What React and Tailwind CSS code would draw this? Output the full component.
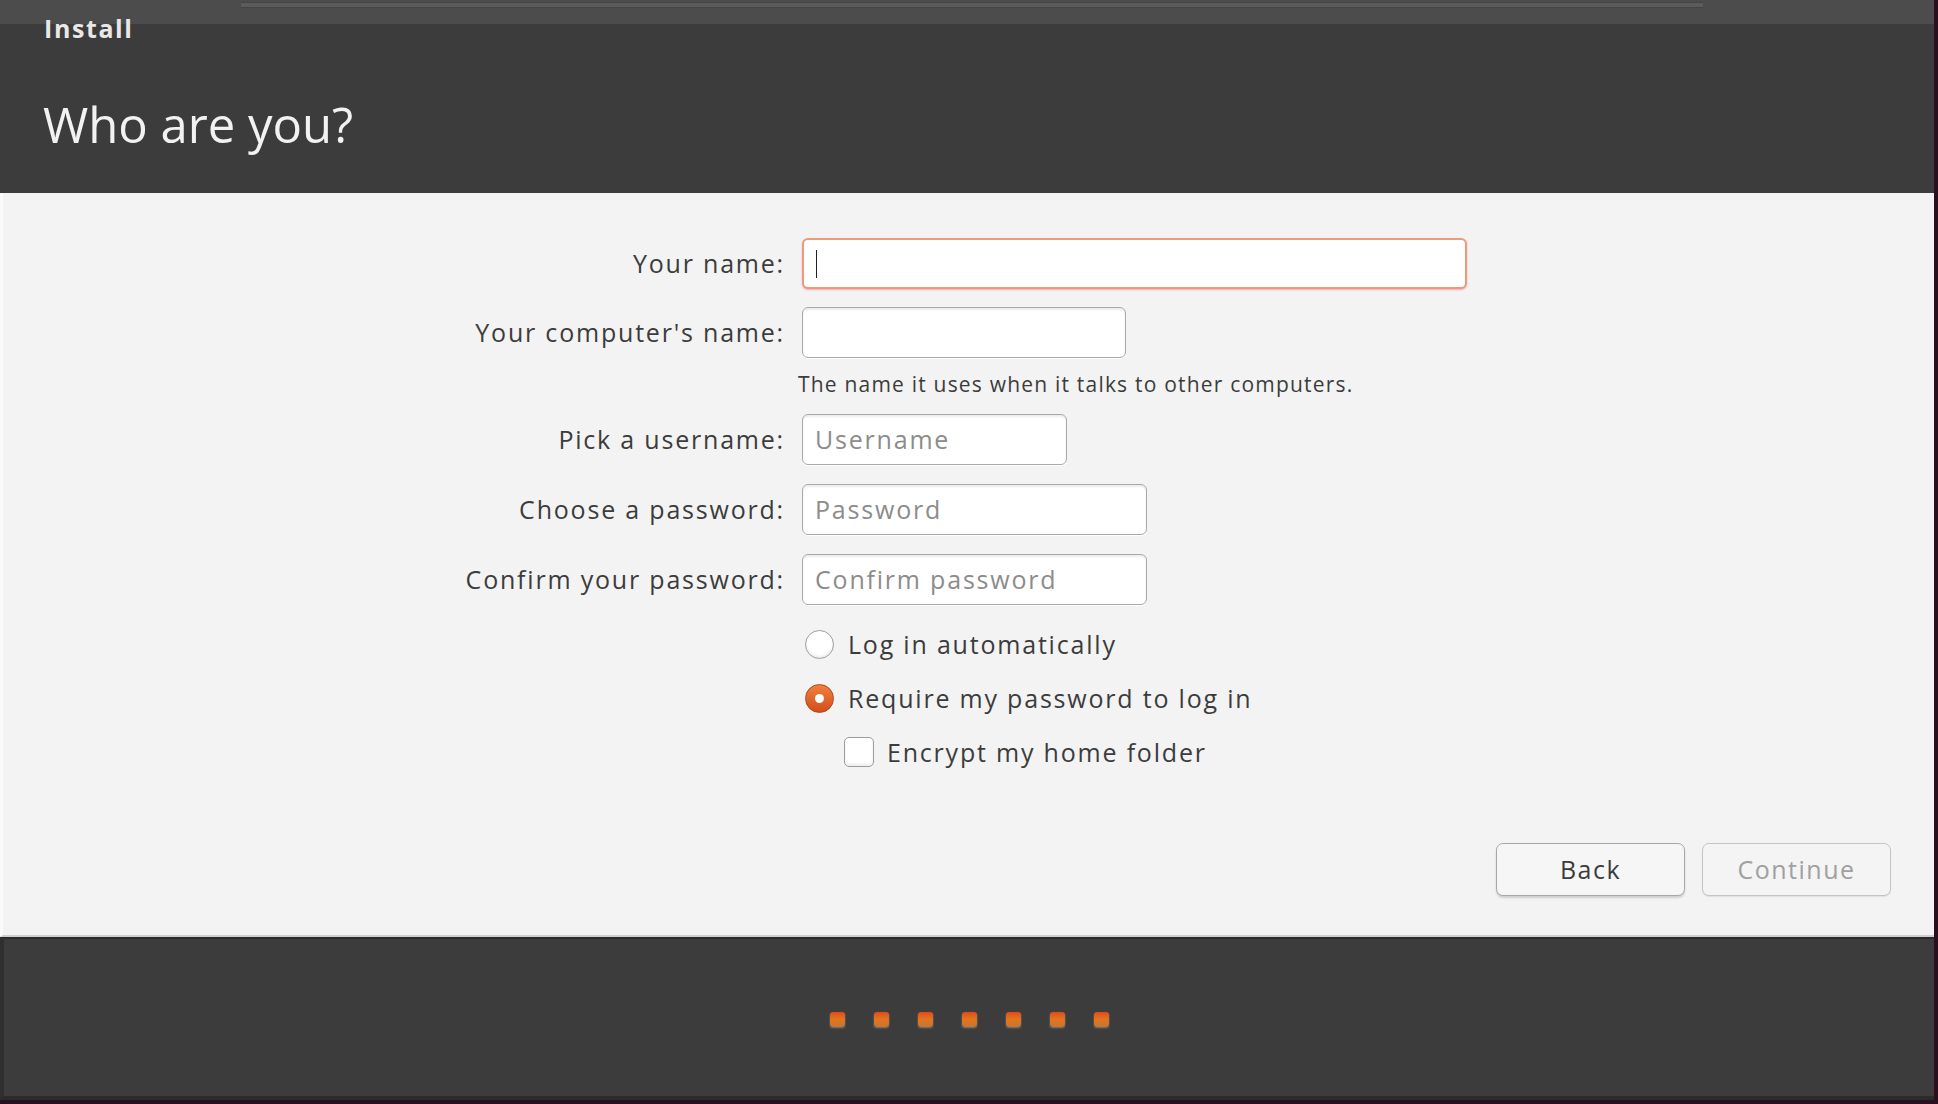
const font = { fontFamily: '"Open Sans", "Noto Sans", sans-serif' };

const Field = ({ label, width, placeholder, focused }) => (
  <>
    <label className="text-right text-[25px] tracking-[1.8px] text-[#3c3c3c] self-center leading-none">{label}</label>
    <div className="flex items-center">
      <div
        className={`h-[51px] rounded-[6px] bg-white flex items-center px-[12px] ${
          focused
            ? "border-2 border-[#ec9a78] shadow-[0_1px_2px_#f5a9b8]"
            : "border border-[#a9a9a9] shadow-[inset_0_2px_2px_rgba(0,0,0,0.08),0_1px_0_#fff]"
        }`}
        style={{ width }}
      >
        {focused ? (
          <span className="w-px h-[28px] bg-[#222]" />
        ) : (
          <span className="text-[25px] tracking-[1.8px] text-[#8c8c8c] leading-none">{placeholder}</span>
        )}
      </div>
    </div>
  </>
);

export default function App() {
  const dots = [0, 1, 2, 3, 4, 5, 6];
  return (
    <div className="w-[1938px] h-[1104px] bg-[#2a0f1f] flex flex-col overflow-hidden" style={font}>
      {/* header */}
      <div className="relative h-[193px] w-[1934px] bg-[#3c3c3c] shrink-0">
        <div className="absolute top-0 left-0 right-0 h-[24px] bg-[#4c4c4c]">
          <div className="absolute top-[2px] left-[241px] w-[1462px] h-[6px] bg-[#5b5b5b] border-y border-[#444]" />
        </div>
        <div className="relative pl-[44px] pt-[13px]">
          <div className="text-[25px] font-bold tracking-[1.6px] text-[#e8e8e8] leading-[30px]">Install</div>
          <div className="mt-[57px] text-[49px] tracking-[0px] text-[#f2f2f2] leading-[48px] -ml-[1px]">Who are you?</div>
        </div>
      </div>

      {/* content */}
      <div className="h-[744px] w-[1934px] bg-[#f3f3f3] border-l-[3px] border-l-[#fafafa] border-b-[2px] border-b-[#cfcfcf] flex flex-col shrink-0">
        <div className="grid grid-cols-[782px_auto] gap-x-[17px] pt-[45px]">
          <Field label="Your name:" width="665px" focused />
          <div className="h-[18px] col-span-2" />
          <Field label="Your computer's name:" width="324px" />
          <div />
          <div className="text-[21px] tracking-[1.2px] text-[#3c3c3c] leading-none pt-[16px] pb-[19px] -ml-[4px]">
            The name it uses when it talks to other computers.
          </div>
          <Field label="Pick a username:" width="265px" placeholder="Username" />
          <div className="h-[19px] col-span-2" />
          <Field label="Choose a password:" width="345px" placeholder="Password" />
          <div className="h-[19px] col-span-2" />
          <Field label="Confirm your password:" width="345px" placeholder="Confirm password" />
          <div />
          <div className="flex flex-col pt-[24px]">
            <div className="flex items-center h-[30px]">
              <span className="w-[29px] h-[29px] rounded-full border border-[#9c9c9c] bg-white shadow-[inset_0_-2px_3px_rgba(0,0,0,0.08)] ml-[3px]" />
              <span className="ml-[14px] text-[25px] tracking-[1.8px] text-[#3c3c3c] leading-none">Log in automatically</span>
            </div>
            <div className="flex items-center h-[30px] mt-[24px]">
              <span className="w-[29px] h-[29px] rounded-full border border-[#b3441a] bg-gradient-to-b from-[#f0803e] to-[#d24e1a] flex items-center justify-center ml-[3px]">
                <span className="w-[9px] h-[9px] rounded-full bg-white" />
              </span>
              <span className="ml-[14px] text-[25px] tracking-[1.8px] text-[#3c3c3c] leading-none">Require my password to log in</span>
            </div>
            <div className="flex items-center h-[30px] mt-[24px] pl-[42px]">
              <span className="w-[30px] h-[30px] rounded-[5px] border border-[#9c9c9c] bg-white shadow-[inset_0_-2px_3px_rgba(0,0,0,0.08)]" />
              <span className="ml-[13px] text-[25px] tracking-[1.8px] text-[#3c3c3c] leading-none">Encrypt my home folder</span>
            </div>
          </div>
        </div>

        <div className="mt-auto mb-[39px] flex justify-end gap-[17px] pr-[43px]">
          <button className="w-[189px] h-[53px] rounded-[7px] border border-[#a8a8a8] bg-[#f6f6f6] shadow-[0_2px_2px_rgba(0,0,0,0.15)] text-[25px] tracking-[1.5px] text-[#3c3c3c]">
            Back
          </button>
          <button className="w-[189px] h-[53px] rounded-[7px] border border-[#c4c4c4] bg-[#f4f4f4] shadow-[0_1px_1px_rgba(0,0,0,0.08)] text-[25px] tracking-[1.5px] text-[#a0a0a0]">
            Continue
          </button>
        </div>
      </div>

      {/* footer */}
      <div className="h-[163px] w-[1934px] bg-[#3c3c3c] border-t-[2px] border-t-[#2a2a2a] border-l-[4px] border-l-[#2f2f2f] border-b-[4px] border-b-[#2b2b2b] flex items-center justify-center gap-[29px] pt-[4px] shrink-0">
        {dots.map((d) => (
          <span
            key={d}
            className="w-[15px] h-[15px] rounded-[3px] bg-gradient-to-b from-[#e4471a] via-[#e0761e] to-[#c9742e] shadow-[0_1px_2px_rgba(255,255,255,0.35)]"
          />
        ))}
      </div>
    </div>
  );
}
